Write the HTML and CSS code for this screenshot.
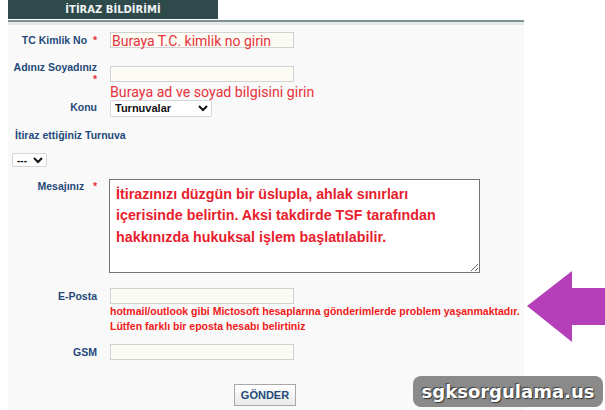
FILE: index.html
```html
<!DOCTYPE html>
<html>
<head>
  <title>İtiraz Bildirimi</title>
  <link rel="stylesheet" href="styles.css">
</head>
<body>
  <div class="page">
    <div class="tabs">
      <div class="tab">İTİRAZ BİLDİRİMİ</div>
    </div>
    <form class="panel">
      <div class="row row-tc">
        <label class="lbl">TC Kimlik No &nbsp;<span class="req">*</span></label>
        <div class="field">
          <input type="text" class="txt">
          <span class="note-over">Buraya T.C. kimlik no girin</span>
        </div>
      </div>

      <div class="row row-name">
        <label class="lbl lbl-wrap">Adınız Soyadınız<br><span class="req">*</span></label>
        <div class="field">
          <input type="text" class="txt">
          <div class="note-big">Buraya ad ve soyad bilgisini girin</div>
        </div>
      </div>

      <div class="row row-konu">
        <label class="lbl">Konu</label>
        <div class="field">
          <select class="sel sel-konu">
            <option>Turnuvalar</option>
          </select>
        </div>
      </div>

      <div class="lbl-left">İtiraz ettiğiniz Turnuva</div>
      <select class="sel sel-turnuva">
        <option>---</option>
      </select>

      <div class="row row-msg">
        <label class="lbl">Mesajınız &nbsp;&nbsp;<span class="req">*</span></label>
        <div class="field">
          <textarea class="msg">İtirazınızı düzgün bir üslupla, ahlak sınırları
içerisinde belirtin. Aksi takdirde TSF tarafından
hakkınızda hukuksal işlem başlatılabilir.</textarea>
        </div>
      </div>

      <div class="row row-mail">
        <label class="lbl">E-Posta</label>
        <div class="field">
          <input type="text" class="txt">
          <div class="warn">hotmail/outlook gibi Mictosoft hesaplarına gönderimlerde problem yaşanmaktadır.<br>Lütfen farklı bir eposta hesabı belirtiniz</div>
        </div>
      </div>

      <div class="row row-gsm">
        <label class="lbl">GSM</label>
        <div class="field">
          <input type="text" class="txt">
        </div>
      </div>

      <div class="actions">
        <button type="button" class="btn">GÖNDER</button>
      </div>
    </form>
  </div>

  <svg class="arrow" width="80" height="76" viewBox="0 0 80 76">
    <polygon points="1,35 46,0 46,17 80,17 80,54 46,54 46,71" fill="#b53fb8"/>
  </svg>
  <div class="watermark">sgksorgulama.us</div>
</body>
</html>
```

FILE: styles.css
```css
body {
  margin: 0;
  background-color: #fff;
  font-family: "Liberation Sans", Arial, sans-serif;
}

.page {
  width: 516px;
  margin-left: 8px;
}

.tabs {
  height: 20px;
  border-bottom: 2px solid #7f9290;
}

.tab {
  width: 210px;
  height: 19px;
  background-color: #2f4a4b;
  color: #eef3f3;
  font-family: "DejaVu Sans", Verdana, sans-serif;
  font-weight: bold;
  font-size: 10px;
  line-height: 19px;
  text-align: center;
}

.panel {
  background-color: #f9f9f9;
  border-top: 3px solid #e4e9eb;
  padding: 7px 0 0 0;
  height: 388px;
  box-sizing: border-box;
}

.row {
  display: flex;
  align-items: flex-start;
}

.lbl {
  flex-shrink: 0;
  width: 89px;
  margin-right: 13px;
  text-align: right;
  color: #24497a;
  font-weight: bold;
  font-size: 10.5px;
  white-space: nowrap;
}

.req {
  color: #e8323c;
}

.field {
  position: relative;
}

.txt {
  width: 184px;
  height: 16px;
  padding: 0;
  border: 1px solid #d2d2d2;
  background-color: #fcfcf4;
  box-sizing: border-box;
  display: block;
}

.note-over {
  position: absolute;
  left: 2px;
  top: 1px;
  color: #e8323c;
  font-family: Roboto, sans-serif;
  font-size: 14px;
  line-height: 16px;
  white-space: nowrap;
}

.row-tc .lbl {
  padding-top: 2px;
}

.row-name {
  margin-top: 18px;
}

.row-name .lbl {
  line-height: 12px;
  margin-top: -5px;
}

.note-big {
  color: #e8323c;
  font-family: Roboto, sans-serif;
  font-size: 14.2px;
  line-height: 20px;
  white-space: nowrap;
}

.row-konu {
  margin-top: -4px;
}

.row-konu .lbl {
  padding-top: 3px;
}

.sel {
  font-family: "Liberation Sans", Arial, sans-serif;
  font-weight: bold;
  font-size: 11px;
  color: #111;
  border: 1px solid #d6d6d6;
  background-color: #fff;
  border-radius: 2px;
}

.sel-konu {
  width: 102px;
  height: 17px;
  padding: 0;
}

.lbl-left {
  margin: 12px 0 0 7px;
  color: #24497a;
  font-weight: bold;
  font-size: 10.5px;
}

.sel-turnuva {
  display: block;
  margin: 12px 0 0 4px;
  width: 35px;
  height: 14px;
  padding: 0;
  font-size: 10px;
}

.row-msg {
  margin-top: 12px;
}

.row-msg .lbl {
  padding-top: 1px;
}

.msg {
  width: 371px;
  height: 94px;
  margin: 0 0 0 -1px;
  padding: 4px 6px;
  box-sizing: border-box;
  border: 1px solid #747474;
  background-color: #fff;
  color: #e8202c;
  font-family: "Liberation Sans", Arial, sans-serif;
  font-weight: bold;
  font-size: 14.3px;
  line-height: 21.5px;
  resize: both;
  display: block;
  white-space: pre;
  overflow: hidden;
}

.row-mail {
  margin-top: 15px;
}

.row-mail .lbl {
  padding-top: 2px;
}

.warn {
  color: #f01a1a;
  font-weight: bold;
  font-size: 10.5px;
  line-height: 15px;
  white-space: nowrap;
}

.row-gsm {
  margin-top: 10px;
}

.row-gsm .lbl {
  padding-top: 2px;
}

.actions {
  margin-top: 24px;
  padding-left: 226px;
}

.btn {
  width: 62px;
  height: 22px;
  padding: 0;
  border: 1px solid #a8a8a8;
  background: linear-gradient(#ffffff, #e9e9e9);
  color: #24497a;
  font-family: "Liberation Sans", Arial, sans-serif;
  font-weight: bold;
  font-size: 11px;
}

.arrow {
  position: absolute;
  left: 526px;
  top: 271px;
}

.watermark {
  position: absolute;
  left: 413px;
  top: 376px;
  width: 190px;
  height: 31px;
  border-radius: 8px;
  background-color: #8a8a8a;
  color: #fff;
  font-family: "DejaVu Sans", Verdana, sans-serif;
  font-weight: bold;
  font-size: 18px;
  line-height: 31px;
  text-align: center;
  text-shadow: 1px 1px 1px #333, -1px -1px 1px #444;
}
```
